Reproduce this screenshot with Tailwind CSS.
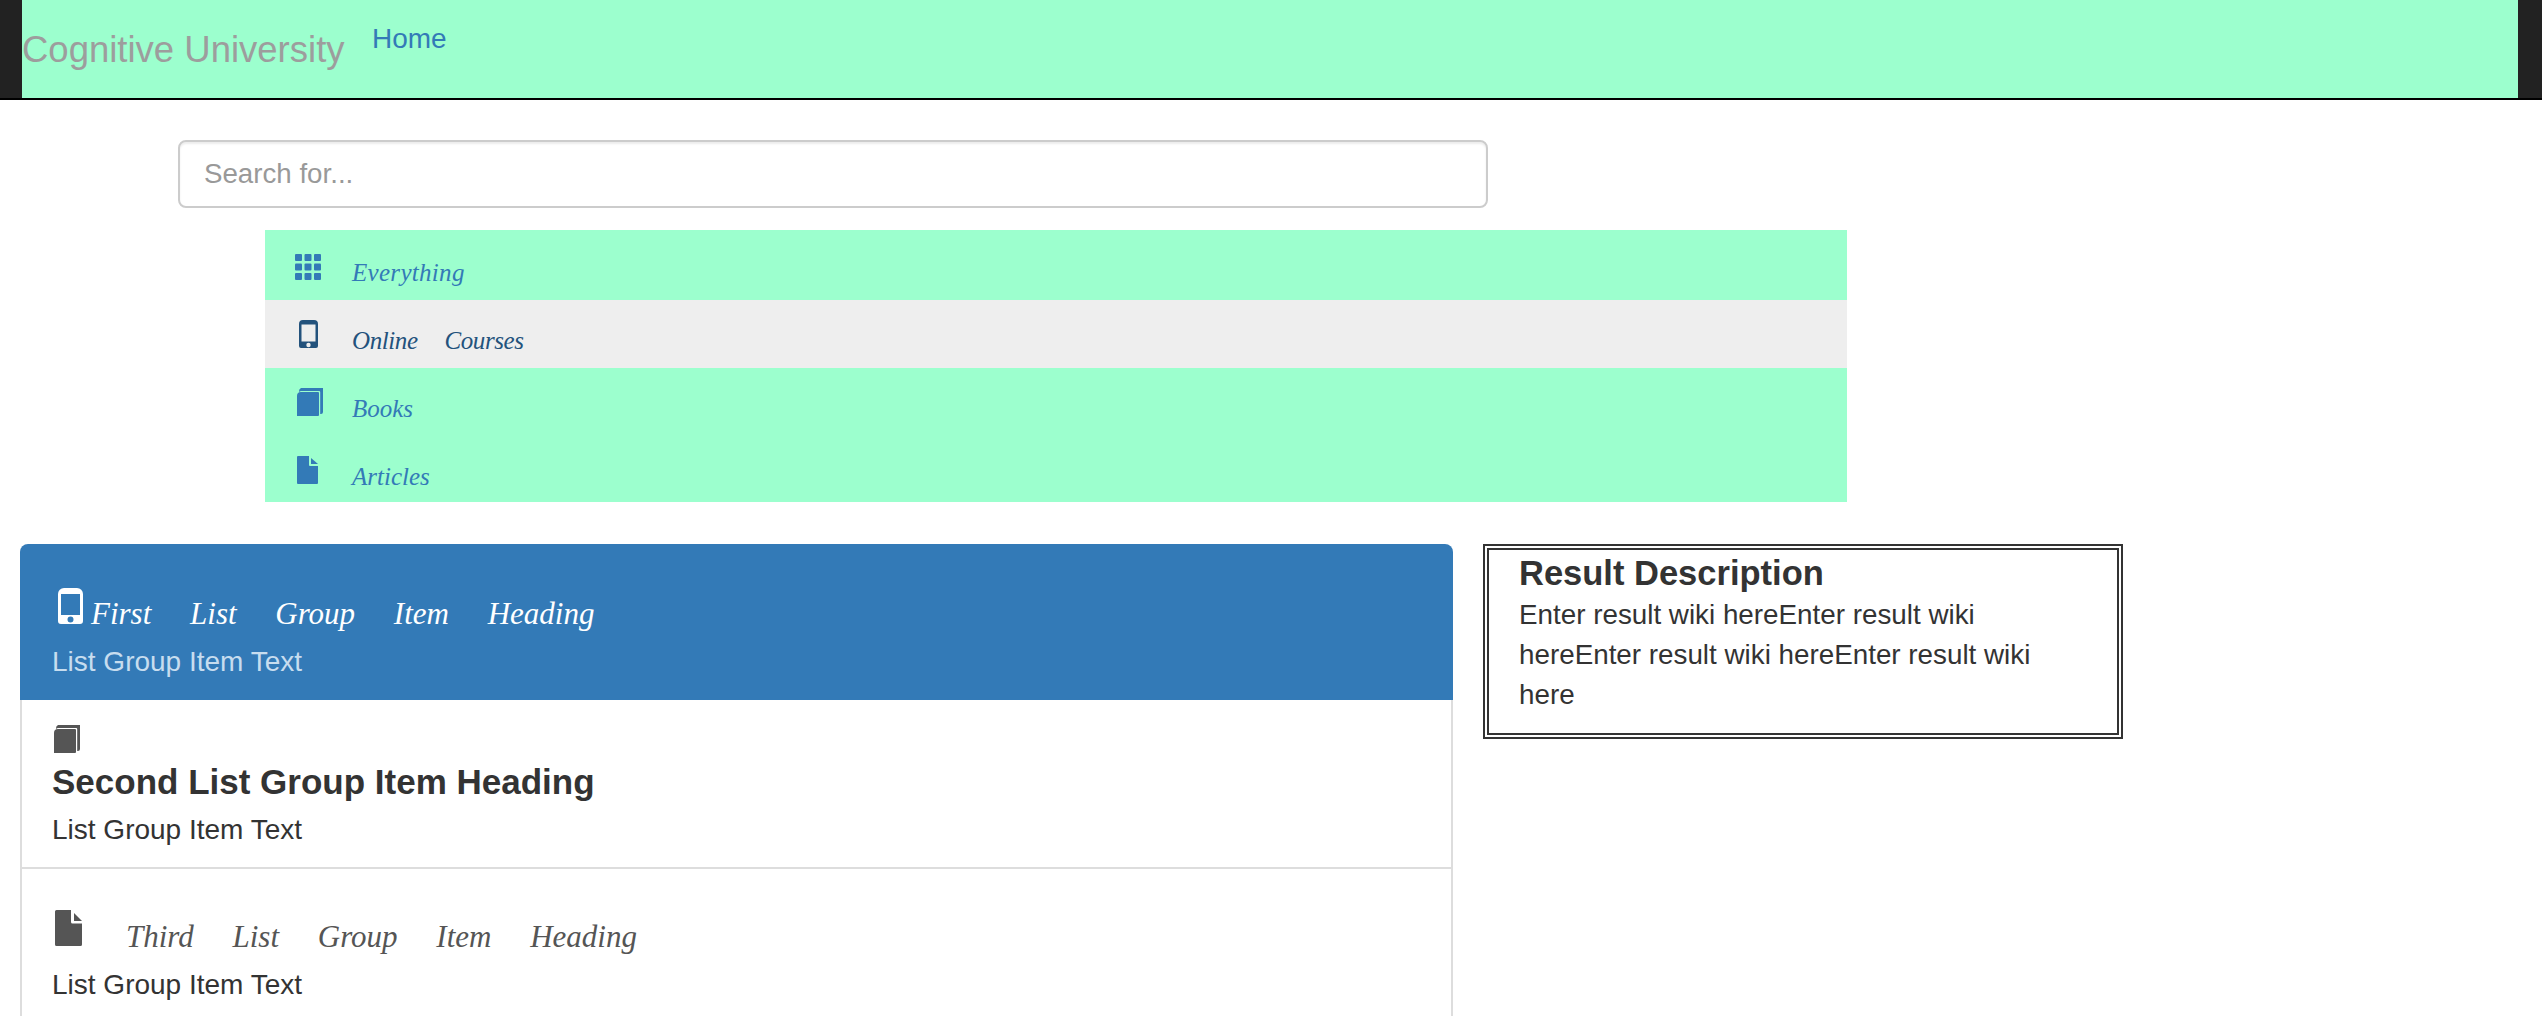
<!DOCTYPE html>
<html lang="en">
<head>
  <meta charset="UTF-8">
  <meta name="viewport" content="width=device-width, initial-scale=1.0">
  <title>Cognitive University</title>
  <script src="https://cdn.jsdelivr.net/npm/@tailwindcss/browser@4"></script>
</head>
<body class="bg-white h-[1016px] overflow-hidden font-['Liberation_Sans',Arial,sans-serif] text-[#333]">
  <!-- navbar -->
  <nav class="bg-[#222] pl-[22px] pr-[24px] border-b-2 border-black h-[100px]">
    <div class="bg-[#9cffce] h-[98px] flex items-start">
      <a class="text-[#9d9d9d] text-[36.500px] leading-[40px] mt-[30px] w-[351px]">Cognitive University</a>
      <a class="text-[#337ab7] text-[28px] leading-[40px] mt-[19px] -ml-[1px]">Home</a>
    </div>
  </nav>

  <!-- search -->
  <div class="ml-[178px] mt-10 w-[1310px] h-[68px]">
    <input type="text" placeholder="Search for..." class="w-full h-full border-2 border-[#ccc] rounded-lg bg-white px-[24px] text-[27.700px] text-[#555] placeholder-[#999] shadow-[inset_0_2px_2px_rgba(0,0,0,0.075)] outline-none">
  </div>

  <!-- pills -->
  <ul class="ml-[265px] mt-[22px] w-[1582px] font-['Liberation_Serif',serif] italic text-[25px] text-[#337ab7]">
    <li class="bg-[#9cffce] h-[70px] flex pl-[30px]">
      <span class="w-[57px] pt-[24px]">
        <svg class="w-[26px] h-[26px] fill-current" viewBox="0 0 26 26"><rect x="0" y="0" width="7" height="7" rx="1"/><rect x="9.500" y="0" width="7" height="7" rx="1"/><rect x="19" y="0" width="7" height="7" rx="1"/><rect x="0" y="9.500" width="7" height="7" rx="1"/><rect x="9.500" y="9.500" width="7" height="7" rx="1"/><rect x="19" y="9.500" width="7" height="7" rx="1"/><rect x="0" y="19" width="7" height="7" rx="1"/><rect x="9.500" y="19" width="7" height="7" rx="1"/><rect x="19" y="19" width="7" height="7" rx="1"/></svg>
      </span>
      <a class="leading-[28px] pt-[29px] tracking-[0.3px]">Everything</a>
    </li>
    <li class="bg-[#eee] h-[68px] flex pl-[34px] text-[#23527c]">
      <span class="w-[53px] pt-[20px]">
        <svg class="w-[19px] h-[28px] fill-current" viewBox="0 0 19 28"><path fill-rule="evenodd" d="M4 0h11a4 4 0 0 1 4 4v22a2 2 0 0 1-2 2H2a2 2 0 0 1-2-2V4a4 4 0 0 1 4-4zM2.500 4.500v17h14v-17zM9.500 22.800a2.200 2.200 0 1 0 0 4.400 2.200 2.200 0 0 0 0-4.400z"/></svg>
      </span>
      <a class="leading-[28px] pt-[27px] [word-spacing:21px] tracking-[-0.4px]">Online Courses</a>
    </li>
    <li class="bg-[#9cffce] h-[68px] flex pl-[32px]">
      <span class="w-[55px] pt-[20px]">
        <svg class="w-[26px] h-[28px] fill-current" viewBox="0 0 26 28"><path d="M4 0h22v24a2 2 0 0 1-2 2h-.8V4a1 1 0 0 0-1-1H4a2 2 0 0 0-2 2V3.500A3.500 3.500 0 0 1 4 0z"/><path d="M4 4h17a1 1 0 0 1 1 1v22a1 1 0 0 1-1 1H0V8a4 4 0 0 1 4-4z"/></svg>
      </span>
      <a class="leading-[28px] pt-[27px]">Books</a>
    </li>
    <li class="bg-[#9cffce] h-[66px] flex pl-[32px]">
      <span class="w-[55px] pt-[20px]">
        <svg class="w-[21px] h-[28px] fill-current" viewBox="0 0 21 28"><path d="M1 0h11v9a1 1 0 0 0 1 1h8v17a1 1 0 0 1-1 1H1a1 1 0 0 1-1-1V1a1 1 0 0 1 1-1z"/><path d="M14 2l7 6h-7z"/></svg>
      </span>
      <a class="leading-[28px] pt-[27px]">Articles</a>
    </li>
  </ul>

  <!-- results -->
  <div class="flex items-start mt-[42px] pl-[20px]">
    <div class="w-[1433px] shrink-0 text-[28px]">
      <a class="block bg-[#337ab7] rounded-t-lg h-[156px] pl-[32px] pt-[44px]">
        <div class="flex items-start text-white font-['Liberation_Serif',serif] italic text-[31px] leading-[40px] [word-spacing:31px]">
          <svg class="w-[25px] h-[36px] fill-current ml-[6px] mr-[8px] shrink-0" viewBox="0 0 25 36"><path fill-rule="evenodd" d="M6 0h13a6 6 0 0 1 6 6v27a3 3 0 0 1-3 3H3a3 3 0 0 1-3-3V6a6 6 0 0 1 6-6zM3 6v21h19V6zM12.500 28.500a3 3 0 1 0 0 6 3 3 0 0 0 0-6z"/></svg>
          <span class="mt-[6px]">First List Group Item Heading</span>
        </div>
        <p class="text-[#c7ddef] leading-[40px] mt-[8px]">List Group Item Text</p>
      </a>
      <a class="block border-x-2 border-b-2 border-[#ddd] h-[169px] pl-[30px] pt-[25px]">
        <svg class="w-[26px] h-[28px] block ml-[2px] fill-[#555]" viewBox="0 0 26 28"><path d="M4 0h22v24a2 2 0 0 1-2 2h-.8V4a1 1 0 0 0-1-1H4a2 2 0 0 0-2 2V3.500A3.500 3.500 0 0 1 4 0z"/><path d="M4 4h17a1 1 0 0 1 1 1v22a1 1 0 0 1-1 1H0V8a4 4 0 0 1 4-4z"/></svg>
        <h4 class="text-[35px] font-bold leading-[34px] mt-[12px]">Second List Group Item Heading</h4>
        <p class="leading-[40px] mt-[11px]">List Group Item Text</p>
      </a>
      <a class="block border-x-2 border-[#ddd] h-[200px] pl-[30px] pt-[41px] text-[#555]">
        <div class="flex items-start font-['Liberation_Serif',serif] italic text-[31px] leading-[40px] [word-spacing:31px]">
          <svg class="w-[27px] h-[36px] fill-current ml-[3px] mr-[44px] shrink-0" viewBox="0 0 27 36"><path d="M1.500 0H16v12a1.500 1.500 0 0 0 1.500 1.500H27V34.500a1.500 1.500 0 0 1-1.500 1.500h-24A1.500 1.500 0 0 1 0 34.500v-33A1.500 1.500 0 0 1 1.500 0z"/><path d="M19 3l8 8h-8z"/></svg>
          <span class="mt-[7px]">Third List Group Item Heading</span>
        </div>
        <p class="text-[#333] leading-[40px] mt-[8px]">List Group Item Text</p>
      </a>
    </div>
    <div class="ml-[30px] w-[640px] h-[195px] border-[6px] border-double border-[#333] pl-[30px] pr-[40px]">
      <h4 class="text-[34.500px] font-bold leading-[40px] mt-[3px]">Result Description</h4>
      <p class="text-[27.800px] leading-[40px] mt-[2px]">Enter result wiki hereEnter result wiki hereEnter result wiki hereEnter result wiki here</p>
    </div>
  </div>
</body>
</html>
